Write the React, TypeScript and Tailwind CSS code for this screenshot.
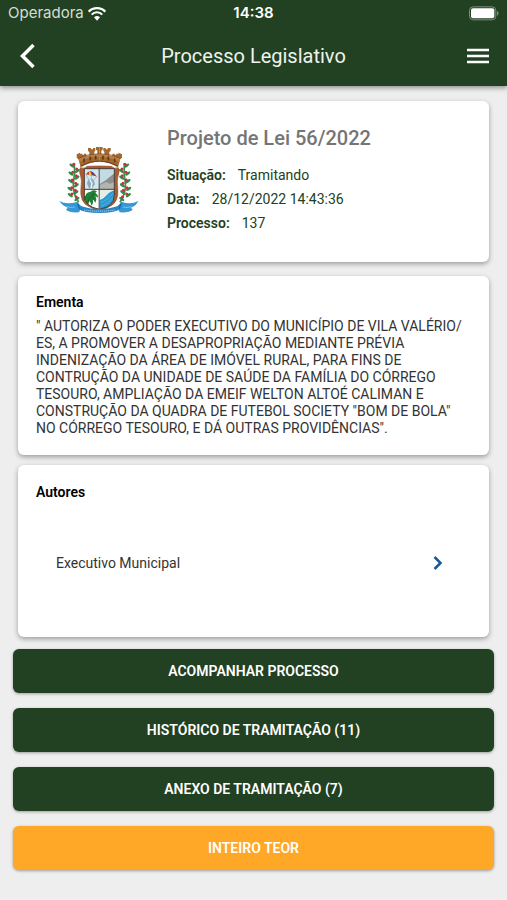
import React from 'react';

interface Detail {
  label: string;
  value: string;
}

interface Action {
  label: string;
  highlight?: boolean;
}

const details: Detail[] = [
  { label: 'Situação:', value: 'Tramitando' },
  { label: 'Data:', value: '28/12/2022 14:43:36' },
  { label: 'Processo:', value: '137' },
];

const actions: Action[] = [
  { label: 'ACOMPANHAR PROCESSO' },
  { label: 'HISTÓRICO DE TRAMITAÇÃO (11)' },
  { label: 'ANEXO DE TRAMITAÇÃO (7)' },
  { label: 'INTEIRO TEOR', highlight: true },
];

const berries = [
  [71, 74], [80, 88], [68, 98], [79, 108], [67, 121], [77, 131], [65, 144], [76, 152], [66, 163], [79, 172],
];

const WifiIcon = () => (
  <svg viewBox="0 0 54 42" className="h-[14px] w-[18px]" aria-hidden="true">
    <path d="M2 14a35 35 0 0 1 50 0" fill="none" stroke="#fff" strokeWidth="7" />
    <path d="M11 23a22 22 0 0 1 32 0" fill="none" stroke="#fff" strokeWidth="6" />
    <path d="M18 31a13 13 0 0 1 18 0l-9 10z" fill="#fff" />
  </svg>
);

const BatteryIcon = () => (
  <svg viewBox="0 0 90 45" className="h-[15px] w-[30px]" aria-hidden="true">
    <rect x="1.5" y="2.5" width="79" height="39" rx="11" fill="none" stroke="#7d8f7d" strokeWidth="3" />
    <rect x="6" y="7" width="70" height="30" rx="6" fill="#fff" />
    <path d="M84 15c6 2 6 12 0 14z" fill="#7d8f7d" />
  </svg>
);

const Branch = () => (
  <g>
    <path d="M73 70q3 30-3 60-3 30 16 58" fill="none" stroke="#3f8f4b" strokeWidth="5" />
    {berries.map(([x, y], i) => (
      <g key={i}>
        <ellipse cx={x - 2} cy={y + 6} rx="9" ry="4" fill="#2f8a45" transform={`rotate(${i % 2 ? -35 : 35} ${x} ${y})`} />
        <circle cx={x} cy={y} r="4.5" fill="#c9303f" />
      </g>
    ))}
  </g>
);

const CrownHalf = () => (
  <g>
    <path
      d="M148 22h-10v8l4 3v12l-9 1V36l3-3v-8h-7v4h-6v-4h-9v9l4 3v11l-9 3V42h-7v3h-5v-3h-7v-3l-10 5v10l5 4 7 25q27-17 56-17z"
      fill="#a3682f"
    />
    <path d="M86 58q28-15 62-15v8q-32 0-60 15z" fill="#b98045" />
    <path d="M92 79q26-15 56-15" fill="none" stroke="#70401c" strokeWidth="3" />
    <path d="M84 56q30-14 64-14" fill="none" stroke="#7b4820" strokeWidth="2" />
    <path d="M102 58v8M121 52v8M137 50v8" stroke="#61381a" strokeWidth="5" strokeLinecap="round" />
  </g>
);

const Crest = () => (
  <svg viewBox="27 22 240 198" className="h-[66px] w-[80px] shrink-0" role="img" aria-label="Brasão municipal">
    <Branch />
    <g transform="translate(296 0) scale(-1 1)">
      <Branch />
    </g>
    {/* shield */}
    <path
      d="M91 84q13 5 21-4l36-1 36 1q8 9 21 4 5 10-1 25-4 13-1 35 5 44-25 57-14 6-30 15-16-9-30-15-30-13-25-57 3-22-1-35-6-15-1-25z"
      fill="#a75d32"
      stroke="#8f4f2b"
      strokeWidth="2"
    />
    <path d="M103 87h90v80q0 34-45 42-45-8-45-42z" fill="#fff" />
    <path d="M103 87h43v61h-43z" fill="#cfe8f2" />
    <path d="M149 87h44v61h-44z" fill="#c2dce6" />
    <path d="M149 133l19-12 25-20v47h-44z" fill="#8c8f8d" />
    <path d="M149 136l19-9 12 5 13-6v22h-44z" fill="#b2b4af" />
    <path d="M107 105q15-24 34 7-12-7-18-4-7-5-16-3" fill="#d72d2c" />
    <path d="M116 97q6-4 9 10l-6 2z" fill="#f2d33a" />
    <path d="M124 96q9 2 10 12l-7-2z" fill="#2f5195" />
    <path d="M109 106l11 20M140 112l-16 16M125 108l-2 20" stroke="#8b97a2" strokeWidth="1.5" />
    <path d="M114 121q8-7 17 0l4 13-9 12h-9l-6-14z" fill="#8caabc" />
    <path d="M119 119l7 12-3 14" fill="none" stroke="#f5f8fa" strokeWidth="4" />
    <path d="M149 181q14-5 20-14 8-12 24-15v17q-2 34-44 40z" fill="#2d9bd1" />
    <path d="M152 188q20-5 38-29M153 199q22-6 36-26" fill="none" stroke="#68bae0" strokeWidth="2" />
    <path d="M149 151h44q-15 5-23 15-7 9-21 12z" fill="#e6eee8" />
    <path
      d="M106 169q3-12 16-13 9-8 19 0l-6 3q10 5 9 15l-8-5q6 10 0 20l-7-10q2 12-4 19l-6-15-4 11q-9-4-8-14l-6 4q-3-7 4-15z"
      fill="#218335"
    />
    <path d="M137 160q-17 4-23 26M129 163q-3 12 3 18" fill="none" stroke="#135b25" strokeWidth="2" />
    <path d="M103 87h90v80q0 34-45 42-45-8-45-42zM103 149h90M147.500 87v121" fill="none" stroke="#4a352d" strokeWidth="3" />
    {/* mural crown */}
    <CrownHalf />
    <g transform="translate(296 0) scale(-1 1)">
      <CrownHalf />
    </g>
    {/* ribbon */}
    <path d="M28 184q23 13 54 2l13 17-8 15q-28 2-39-8l5-6q-15-5-25-20z" fill="#3598d5" />
    <path d="M265 184q-23 13-51 2l-13 17 8 15q28 2 39-8l-5-6q15-5 22-20z" fill="#3598d5" />
    <path d="M79 188q13 19 69 20 56-1 69-20l-6 20q-17 12-63 12t-63-12z" fill="#2688c7" />
    <path d="M83 192l6 15M213 192l-6 15" stroke="#17659e" strokeWidth="3" />
    <path d="M50 200q13 5 25 2M102 211q46 7 92 0M220 202q13 3 25-2" fill="none" stroke="#a5d5ef" strokeWidth="3" strokeDasharray="4 2" />
  </svg>
);

const Card = ({ className, children }: { className: string; children: React.ReactNode }) => (
  <section className={`rounded-md bg-white shadow-[0_2px_5px_rgba(0,0,0,0.35)] ${className}`}>
    {children}
  </section>
);

export default function App() {
  return (
    <div className="min-h-screen bg-[#eeeeee] pb-8 font-['Roboto',sans-serif] text-[#333333]">
      <header className="bg-[#224122] pb-px text-white shadow-[0_2px_5px_rgba(0,0,0,0.4)]">
        <div className="grid h-[27px] grid-cols-3 items-center px-2 font-['Inter',sans-serif] text-[15px]">
          <div className="flex items-center gap-1 text-[#d5ddd5]">
            <span>Operadora</span>
            <WifiIcon />
          </div>
          <span className="text-center font-semibold">14:38</span>
          <div className="flex justify-end">
            <BatteryIcon />
          </div>
        </div>
        <div className="flex h-[58px] items-center justify-between px-[18px]">
          <button type="button" aria-label="Voltar">
            <svg viewBox="0 0 22 26" className="h-[26px] w-[22px]" fill="none" stroke="#fff" strokeWidth="3.500">
              <path d="M15.500 2L4.500 13l11 11" />
            </svg>
          </button>
          <h1 className="text-xl text-[#eef3ee]">Processo Legislativo</h1>
          <button type="button" aria-label="Menu">
            <svg viewBox="0 0 22 16" className="h-4 w-[22px]" stroke="#fff" strokeWidth="2.500">
              <path d="M0 2h22M0 8h22M0 14h22" />
            </svg>
          </button>
        </div>
      </header>

      <main>
        <div className="mx-[18px] mt-[15px] flex flex-col">
          <Card className="flex h-[161px] items-center gap-7 pb-1 pl-[41px]">
            <Crest />
            <div>
              <h2 className="mb-[11px] text-xl font-medium text-[#757575]">Projeto de Lei 56/2022</h2>
              <dl className="text-sm leading-6 text-[#224122]">
                {details.map((detail) => (
                  <div key={detail.label} className="flex gap-3">
                    <dt className="font-semibold">{detail.label}</dt>
                    <dd>{detail.value}</dd>
                  </div>
                ))}
              </dl>
            </div>
          </Card>

          <Card className="mt-3.5 px-[18px] pt-[18px] pb-[18px]">
            <h3 className="mb-[7px] text-sm leading-[17px] font-semibold text-black">Ementa</h3>
            <p className="text-sm leading-[17px]">
              " AUTORIZA O PODER EXECUTIVO DO MUNICÍPIO DE VILA VALÉRIO/<wbr />
              ES, A PROMOVER A DESAPROPRIAÇÃO MEDIANTE PRÉVIA INDENIZAÇÃO DA ÁREA DE IMÓVEL RURAL, PARA FINS DE
              CONTRUÇÃO DA UNIDADE DE SAÚDE DA FAMÍLIA DO CÓRREGO TESOURO, AMPLIAÇÃO DA EMEIF WELTON ALTOÉ
              CALIMAN E CONSTRUÇÃO DA QUADRA DE FUTEBOL SOCIETY "BOM DE BOLA" NO CÓRREGO TESOURO, E DÁ OUTRAS
              PROVIDÊNCIAS".
            </p>
          </Card>

          <Card className="mt-2.5 px-[18px] pt-[19px] pb-[50px]">
            <h3 className="text-sm leading-[17px] font-semibold text-black">Autores</h3>
            <button type="button" className="mt-[38px] flex h-12 w-full items-center justify-between pr-7 pl-5 text-sm">
              <span>Executivo Municipal</span>
              <svg viewBox="0 0 10 16" className="h-4 w-2.5" fill="none" stroke="#16599a" strokeWidth="2.500" aria-hidden="true">
                <path d="M1.500 2l6 6-6 6" />
              </svg>
            </button>
          </Card>
        </div>

        <div className="mx-[13px] mt-3 flex flex-col gap-[15px]">
          {actions.map((action) => (
            <button
              key={action.label}
              type="button"
              className={`h-11 rounded-md text-sm font-semibold text-white shadow-[0_1px_3px_rgba(0,0,0,0.35)] ${
                action.highlight ? 'bg-[#ffa726]' : 'bg-[#224122]'
              }`}
            >
              {action.label}
            </button>
          ))}
        </div>
      </main>
    </div>
  );
}
